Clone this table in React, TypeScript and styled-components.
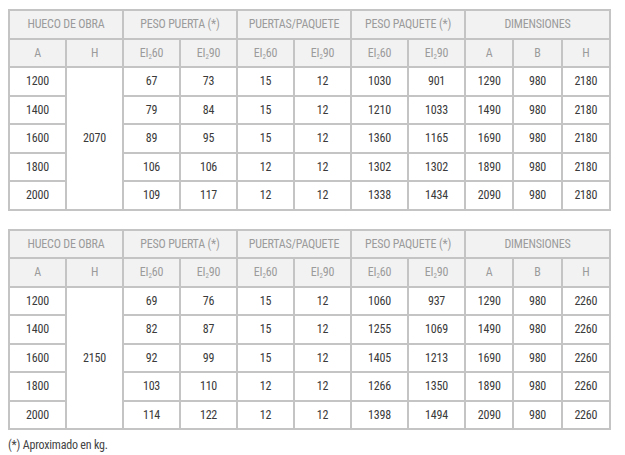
import React from "react";
import styled, { createGlobalStyle } from "styled-components";

const GlobalStyle = createGlobalStyle`
  html, body {
    margin: 0;
    padding: 0;
    background: #ffffff;
  }
  body {
    font-family: "Roboto Condensed", "Liberation Sans Narrow", Roboto, sans-serif;
  }
`;

const Page = styled.div`
  padding: 9px 8px 0 8px;
  display: flex;
  flex-direction: column;
  gap: 18px;
`;

const Table = styled.table`
  width: 601px;
  border-collapse: collapse;
  table-layout: fixed;
  border: 2px solid #c4c4c4;
`;

const Row = styled.tr`
  height: 28.5px;
`;

const HeadCell = styled.th`
  background: #f2f2f2;
  color: #9b9b9b;
  font-weight: 400;
  font-size: 12px;
  text-align: center;
  border: 2px solid #c4c4c4;
  padding: 0;
  letter-spacing: -0.2px;
  white-space: nowrap;
`;

const Cell = styled.td`
  color: #3a3a3a;
  font-size: 12px;
  text-align: center;
  border: 2px solid #c4c4c4;
  padding: 0;
  letter-spacing: -0.2px;
`;

const Sub = styled.sub`
  font-size: 7px;
  vertical-align: -2px;
  line-height: 0;
`;

const Note = styled.p`
  margin: -10px 0 0 0;
  font-size: 12px;
  color: #444;
  letter-spacing: -0.2px;
`;

const EI = ({ n }: { n: string }) => (
  <>
    EI<Sub>2</Sub>
    {n}
  </>
);

type DataRow = (string | number)[];

const tables: { h: number; rows: DataRow[] }[] = [
  {
    h: 2070,
    rows: [
      [1200, 67, 73, 15, 12, 1030, 901, 1290, 980, 2180],
      [1400, 79, 84, 15, 12, 1210, 1033, 1490, 980, 2180],
      [1600, 89, 95, 15, 12, 1360, 1165, 1690, 980, 2180],
      [1800, 106, 106, 12, 12, 1302, 1302, 1890, 980, 2180],
      [2000, 109, 117, 12, 12, 1338, 1434, 2090, 980, 2180],
    ],
  },
  {
    h: 2150,
    rows: [
      [1200, 69, 76, 15, 12, 1060, 937, 1290, 980, 2260],
      [1400, 82, 87, 15, 12, 1255, 1069, 1490, 980, 2260],
      [1600, 92, 99, 15, 12, 1405, 1213, 1690, 980, 2260],
      [1800, 103, 110, 12, 12, 1266, 1350, 1890, 980, 2260],
      [2000, 114, 122, 12, 12, 1398, 1494, 2090, 980, 2260],
    ],
  },
];

const colWidths = [57, 57, 57, 57, 57, 57, 57, 57, 48.33, 48.33, 48.34];

const SpecTable = ({ h, rows }: { h: number; rows: DataRow[] }) => (
  <Table>
    <colgroup>
      {colWidths.map((w, i) => (
        <col key={i} style={{ width: w }} />
      ))}
    </colgroup>
    <thead>
      <Row>
        <HeadCell colSpan={2}>HUECO DE OBRA</HeadCell>
        <HeadCell colSpan={2}>PESO PUERTA (*)</HeadCell>
        <HeadCell colSpan={2}>PUERTAS/PAQUETE</HeadCell>
        <HeadCell colSpan={2}>PESO PAQUETE (*)</HeadCell>
        <HeadCell colSpan={3}>DIMENSIONES</HeadCell>
      </Row>
      <Row>
        <HeadCell>A</HeadCell>
        <HeadCell>H</HeadCell>
        <HeadCell><EI n="60" /></HeadCell>
        <HeadCell><EI n="90" /></HeadCell>
        <HeadCell><EI n="60" /></HeadCell>
        <HeadCell><EI n="90" /></HeadCell>
        <HeadCell><EI n="60" /></HeadCell>
        <HeadCell><EI n="90" /></HeadCell>
        <HeadCell>A</HeadCell>
        <HeadCell>B</HeadCell>
        <HeadCell>H</HeadCell>
      </Row>
    </thead>
    <tbody>
      {rows.map((r, i) => (
        <Row key={i}>
          <Cell>{r[0]}</Cell>
          {i === 0 && <Cell rowSpan={rows.length}>{h}</Cell>}
          {r.slice(1).map((v, j) => (
            <Cell key={j}>{v}</Cell>
          ))}
        </Row>
      ))}
    </tbody>
  </Table>
);

export default function App() {
  return (
    <>
      <GlobalStyle />
      <Page>
        {tables.map((t, i) => (
          <SpecTable key={i} h={t.h} rows={t.rows} />
        ))}
        <Note>(*) Aproximado en kg.</Note>
      </Page>
    </>
  );
}
